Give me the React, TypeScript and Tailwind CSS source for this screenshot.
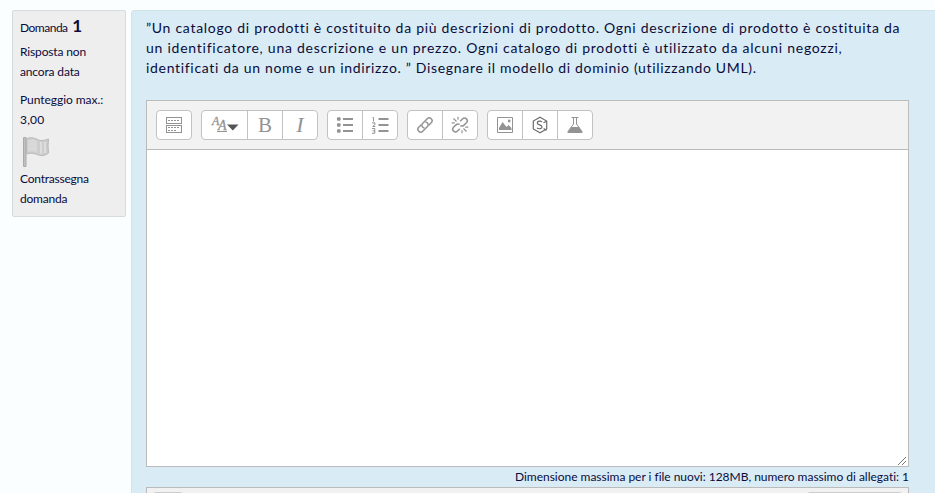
import type { ReactNode } from "react";

function Group({ children }: { children: ReactNode }) {
  return (
    <div className="flex h-[30px] divide-x divide-[#c2c2c2] overflow-hidden rounded border border-[#c2c2c2] bg-white">
      {children}
    </div>
  );
}

function Tool({ label, wide, children }: { label: string; wide?: boolean; children: ReactNode }) {
  return (
    <button
      aria-label={label}
      className={`flex h-7 items-center justify-center text-[#939393] ${wide ? "w-[46px]" : "w-[35px] last:w-[34px]"}`}
    >
      {children}
    </button>
  );
}

const iconProps = {
  width: 18,
  height: 18,
  viewBox: "0 0 18 18",
  fill: "none",
  stroke: "currentColor",
};

function Toolbar() {
  return (
    <div className="flex h-[49px] gap-[9px] border-b border-[#bbb] bg-[#f2f2f2] pt-[9px] pl-[9px]">
      <Group>
        <Tool label="Mostra pulsanti">
          <svg {...iconProps} shapeRendering="crispEdges">
            <path d="M1.500 1.500h15v6h-15zM1.500 9.500h15v7h-15z" />
            <path d="M3 4.500h12M3 11.500h12M3 14.500h9" strokeDasharray="2 1" />
          </svg>
        </Tool>
      </Group>
      <Group>
        <Tool label="Stile" wide>
          <svg width="28" height="20" viewBox="0 0 28 20" fill="currentColor">
            <text x="1" y="10" className="font-['Liberation_Serif',serif] text-[12px] italic" stroke="currentColor" strokeWidth=".3">A</text>
            <text x="7" y="15" className="font-['Liberation_Serif',serif] text-[14px] italic" stroke="currentColor" strokeWidth=".3">A</text>
            <path d="M6 16h10v1H6z" />
            <path d="M16 9.500h11.500l-5.700 6z" fill="#555" />
          </svg>
        </Tool>
        <Tool label="Grassetto">
          <span className="font-['Liberation_Serif',serif] text-[21px] leading-none">B</span>
        </Tool>
        <Tool label="Corsivo">
          <span className="font-['Liberation_Serif',serif] text-[22px] leading-none italic">I</span>
        </Tool>
      </Group>
      <Group>
        <Tool label="Elenco puntato">
          <svg {...iconProps} fill="currentColor" stroke="none">
            <rect x="1" y="1.200" width="3.600" height="3.600" rx="1" />
            <rect x="1" y="7.200" width="3.600" height="3.600" rx="1" />
            <rect x="1" y="13.200" width="3.600" height="3.600" rx="1" />
            <path d="M7 2h10v2H7zM7 8h10v2H7zM7 14h10v2H7z" />
          </svg>
        </Tool>
        <Tool label="Elenco numerato">
          <svg {...iconProps}>
            <path d="M7.500 3h10M7.500 9h10M7.500 15h10" strokeWidth="2" />
            <path d="M1.500 1.500h1v4M1 6.900h3v1.600l-2.300 2h2.600M1 12.500h2.800v4.800H1M1.500 14.900h2.300" />
          </svg>
        </Tool>
      </Group>
      <Group>
        <Tool label="Collegamento">
          <svg {...iconProps} strokeWidth="1.500">
            <g transform="rotate(-45 9 9)">
              <path d="M8 6.200h7a2.800 2.800 0 0 1 0 5.600h-3.500M8 6.200a2.800 2.800 0 0 0-1.500 4.600" />
              <path d="M10 11.800H3a2.800 2.800 0 0 1 0-5.600h3.500M10 11.800a2.800 2.800 0 0 0 1.500-4.600" />
            </g>
          </svg>
        </Tool>
        <Tool label="Rimuovi collegamento">
          <svg {...iconProps} strokeWidth="1.500">
            <path d="m9.200 5.200 2.300-2.200a2.700 2.700 0 0 1 4 3.700L12.700 9.400c-1 1-2.500.9-3.300 0M8.800 12.800l-2.300 2.200a2.700 2.700 0 0 1-4-3.700l2.800-2.700c1-1 2.500-.9 3.300 0" />
            <path d="m2.500 2.500 3 3M.8 6.800h3M7 .8v3M15.500 15.500l-3-3M17.200 11.200h-3M11 17.200v-3" strokeWidth="1.200" />
          </svg>
        </Tool>
      </Group>
      <Group>
        <Tool label="Immagine">
          <svg {...iconProps}>
            <path d="M1.500 1.500h15v15h-15z" />
            <path d="M3 14v-2l3.500-6 4 5 2-2 3 3v2z" fill="currentColor" stroke="none" />
            <circle cx="13.200" cy="5" r="1.400" fill="currentColor" stroke="none" />
          </svg>
        </Tool>
        <Tool label="Formula chimica">
          <svg {...iconProps} className="text-[#6c6c6c]" strokeWidth="1.200">
            <path d="m9 1.200 6.700 3.900v7.800L9 16.800l-6.700-3.900V5.100z" />
            <path d="M11 5.700C9.200 4.600 6.300 5 6.300 7c0 2.300 4.700 1.500 4.700 3.900 0 2.100-3.200 2.300-5 1.200M15.500 5.200l-3 1.600M12.600 12.600l3 1.600" />
          </svg>
        </Tool>
        <Tool label="Reagenti">
          <svg {...iconProps}>
            <path d="M5.500 1.500h7M7.500 2v6L2 15.500v1h14v-1L10.500 8V2" />
            <path d="M5.200 11h7.600l3.700 5.500h-15z" fill="currentColor" stroke="none" />
          </svg>
        </Tool>
      </Group>
    </div>
  );
}

export default function App() {
  return (
    <main className="flex h-[493px] w-[935px] overflow-hidden bg-[#fbfefe] pt-[10px] pl-[12px] font-['Lato','Open_Sans',sans-serif] text-[#0b0b3b]">
      <aside className="mr-[5px] h-[207px] w-[114px] shrink-0 rounded-[2px] border border-[#d5dcdc] bg-[#eee] px-[7px] pt-[5px] text-[12px] leading-5 tracking-[-0.15px]">
        <h3 className="h-[26px] tracking-[-0.5px]">
          Domanda <span className="ml-[2px] text-[17px] font-bold">1</span>
        </h3>
        <p className="h-12">Risposta non<br />ancora data</p>
        <p className="h-[46px] whitespace-nowrap"><span className="tracking-[-0.05px]">Punteggio max.:</span><br /><span className="tracking-[0.2px]">3,00</span></p>
        <svg width="30" height="32" viewBox="0 0 30 32" className="block">
          <path d="M3.500 1.500h2.500v29h-2.500z" fill="#c0c0c0" stroke="#aaa" />
          <path d="M6.500 2.500c5-1.500 8-.5 11 1s5 1.500 11-.5l-.5 7 .5 7c-4 3-7 3-10 2s-7-3-12-1z" fill="#cdcdcd" stroke="#b8b8b8" />
          <path d="M8 4c4-1 7-.5 9 1v12c-3-2-6-2-9-1z" fill="#d8d8d8" />
          <path d="M21 6v12M25 6v11" stroke="#ddd" strokeWidth="2" />
        </svg>
        <p className="mt-[1px] tracking-[-0.22px]">Contrassegna<br />domanda</p>
      </aside>
      <section className="h-[520px] w-[830px] shrink-0 rounded-[3px] border border-[#cfe4e9] bg-[#d9ecf5] pt-[7px] pl-[14px]">
        <div className="h-[82px] text-[14px] leading-5 whitespace-nowrap">
          <p className="tracking-[0.71px]">”Un catalogo di prodotti è costituito da più descrizioni di prodotto. Ogni descrizione di prodotto è costituita da</p>
          <p className="tracking-[0.75px]">un identificatore, una descrizione e un prezzo. Ogni catalogo di prodotti è utilizzato da alcuni negozzi,</p>
          <p className="tracking-[0.68px]">identificati da un nome e un indirizzo. ” Disegnare il modello di dominio (utilizzando UML).</p>
        </div>
        <div className="h-[367px] w-[763px] border border-[#bbb] bg-white">
          <Toolbar />
          <div className="flex h-[316px] items-end justify-end">
            <svg width="12" height="12" viewBox="0 0 12 12" fill="none" stroke="#777"><path d="m2 11 8-8M6 11l4-4" /></svg>
          </div>
        </div>
        <p className="h-5 w-[763px] text-right text-[12px] leading-5 tracking-[-0.02px] whitespace-nowrap">Dimensione massima per i file nuovi: 128MB, numero massimo di allegati: 1</p>
        <div className="flex h-10 w-[763px] justify-between border border-[#bbb] bg-[#f2f1f1] px-[5px] pt-1">
          <span className="h-7 w-[32px] rounded border border-[#ccc] bg-[#ddd]" />
          <span className="h-7 w-[97px] rounded border border-[#ccc] bg-[#ddd]" />
        </div>
      </section>
    </main>
  );
}
